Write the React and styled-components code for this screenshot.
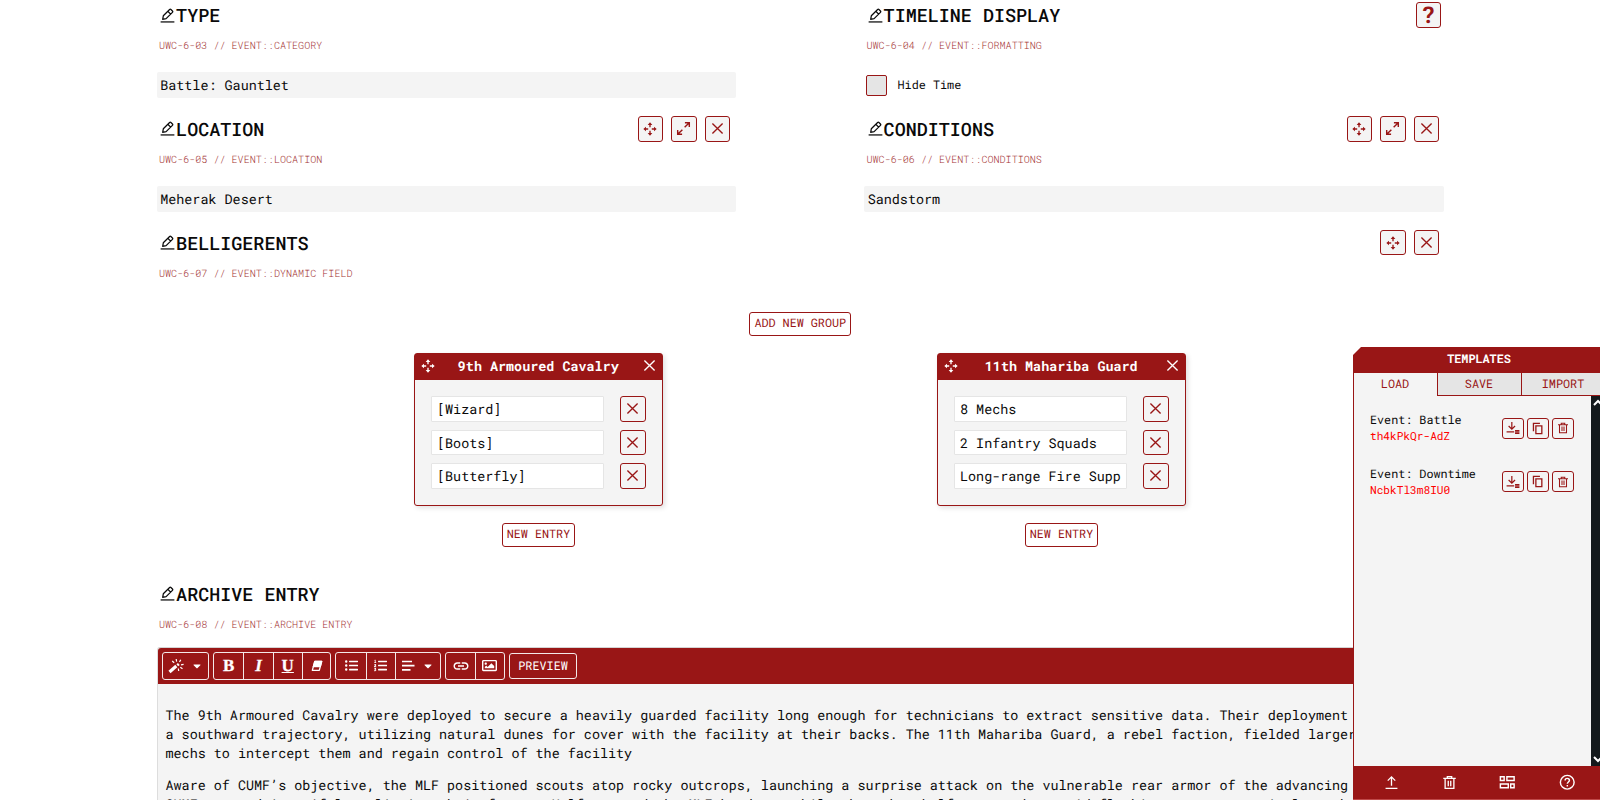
import React from 'react';
import styled, { createGlobalStyle } from 'styled-components';
import { FaListUl, FaListOl, FaCaretDown, FaRegImage } from 'react-icons/fa';
import { MdLink } from 'react-icons/md';

const red = '#991616';

const Global = createGlobalStyle`
  * { box-sizing: border-box; }
  body { margin: 0; background: #fff; overflow: hidden; }
  #root {
    font-family: 'Roboto Mono', 'Liberation Mono', monospace;
    font-size: 13.42px;
    color: #0a0a0a;
    text-rendering: geometricPrecision;
  }
  svg { display: block; flex: none; }
  button { font-family: inherit; text-rendering: inherit; }
`;

const Page = styled.main`
  width: 1600px;
  height: 800px;
  overflow: hidden;
  padding: 0 156px 0 156.5px;
`;
const Columns = styled.div`
  display: grid;
  grid-template-columns: 579.5px 580px;
  justify-content: space-between;
`;
const Section = styled.section`
  height: 113.8px;
`;
const TitleRow = styled.div`
  display: flex;
  align-items: center;
  justify-content: space-between;
  height: 30px;
  padding-right: ${(p) => p.$end || 5.5}px;
`;
const Title = styled.h2`
  display: flex;
  align-items: center;
  gap: 1px;
  margin: 0;
  padding: 0.4px 0 0 3.6px;
  font-size: 18.4px;
  font-weight: 500;
  line-height: 28px;
`;
const Code = styled.p`
  margin: 5px 0 0 2.5px;
  height: 20px;
  font-size: 10.08px;
  font-weight: 300;
  line-height: 20px;
  color: ${red};
  opacity: 0.9;
`;
const Field = styled.div`
  height: 26px;
  margin-top: 17px;
  padding-left: 3.7px;
  line-height: 26.5px;
  background: #f4f4f4;
  border-radius: 2px;
`;
const CheckRow = styled.label`
  display: flex;
  align-items: center;
  gap: 10.5px;
  height: 26px;
  margin: 17.5px 0 0 2px;
  font-size: 11.8px;
`;
const CheckBox = styled.span`
  width: 21px;
  height: 21px;
  background: #e5e5e5;
  border: 1px solid ${red};
  border-radius: 2px;
`;
const Actions = styled.div`
  display: flex;
  gap: 8px;
`;
const IconButton = styled.button`
  display: grid;
  place-items: center;
  width: ${(p) => p.$size || 25.5}px;
  height: ${(p) => p.$size || 25.5}px;
  padding: 0;
  color: ${red};
  background: #f4f4f4;
  border: 1px solid ${red};
  border-radius: 3px;
`;
const HelpMark = styled.span`
  font-size: 23px;
  font-weight: 700;
  line-height: 22px;
`;
const TextButton = styled.button`
  height: 24px;
  padding: 0 4px;
  font-size: 11.75px;
  line-height: 22px;
  color: ${red};
  background: #fff;
  border: 1px solid ${red};
  border-radius: 3px;
`;
const Belligerents = styled.section`
  height: 351px;
`;
const Center = styled.div`
  display: flex;
  justify-content: center;
  margin-top: 29.5px;
`;
const Groups = styled.div`
  display: grid;
  grid-template-columns: 523px 523px;
  justify-content: center;
  margin-top: 16.5px;
`;
const Group = styled.div`
  display: flex;
  flex-direction: column;
  align-items: center;
  gap: 17px;
  padding-right: 0.5px;
`;
const Card = styled.div`
  width: 249px;
  height: 153px;
  background: #f4f4f4;
  border: 1px solid ${red};
  border-radius: 3px;
  box-shadow: 2px 2px 5px rgba(0, 0, 0, 0.12);
`;
const CardHead = styled.div`
  display: flex;
  align-items: center;
  justify-content: space-between;
  height: 26px;
  padding: 0 4px 1.5px 4.5px;
  color: #fff;
  background: ${red};
  font-weight: 700;
`;
const CardBody = styled.div`
  display: grid;
  gap: 8px;
  padding: 16.5px 16.5px 0 16px;
`;
const Entry = styled.div`
  display: flex;
  justify-content: space-between;
`;
const EntryInput = styled.div`
  width: 173px;
  height: 25.5px;
  padding: 0 5px;
  overflow: hidden;
  white-space: nowrap;
  line-height: 24.5px;
  background: #fff;
  border: 1px solid #e5e5e5;
  border-radius: 1px;
`;
const Editor = styled.div`
  height: 180px;
  margin-top: 13.3px;
  background: #f4f4f4;
  border: 1px solid #d4d4d4;
  border-left-color: #ddd;
  border-radius: 3px 3px 0 0;
`;
const Toolbar = styled.div`
  display: flex;
  align-items: center;
  gap: 4px;
  height: 36px;
  padding-left: 4px;
  background: ${red};
  border-radius: 3px 3px 0 0;
`;
const ToolGroup = styled.div`
  display: flex;
  height: 27.5px;
  border: 1px solid #f4e8e8;
  border-radius: 3px;
`;
const Tool = styled.div`
  display: flex;
  align-items: center;
  justify-content: center;
  gap: 7px;
  width: ${(p) => p.$w || 29.3}px;
  color: #fff;
  & + & { border-left: 1px solid #f4e8e8; }
`;
const Glyph = styled.span`
  font-family: 'Liberation Serif', serif;
  font-size: 17px;
  font-weight: 700;
  line-height: 24px;
  font-style: ${(p) => (p.$italic ? 'italic' : 'normal')};
  text-decoration: ${(p) => (p.$underline ? 'underline' : 'none')};
  text-underline-offset: 1px;
  -webkit-text-stroke: 0.3px #fff;
`;
const Preview = styled.div`
  height: 26px;
  padding: 1px 8.3px 0;
  font-size: 11.8px;
  line-height: 24px;
  color: #fff;
  border: 1px solid #f4e8e8;
  border-radius: 3px;
`;
const Copy = styled.div`
  padding: 22.6px 0 0 8px;
  line-height: 18.75px;
  white-space: pre;
`;
const Paragraph = styled.p`
  margin: 0 0 13.2px;
`;

const Drawer = styled.aside`
  position: fixed;
  top: 347px;
  right: -5px;
  display: flex;
  flex-direction: column;
  width: 252px;
  height: 453px;
  background: ${red};
  clip-path: polygon(8px 0, 100% 0, 100% 100%, 0 100%, 0 8px);
  border-bottom: 1px solid #c04a4a;
`;
const DrawerTitle = styled.div`
  height: 26px;
  padding-top: 1px;
  color: #fff;
  font-size: 11.8px;
  font-weight: 700;
  line-height: 24.5px;
  text-align: center;
`;
const Tabs = styled.div`
  display: grid;
  grid-template-columns: repeat(3, 84px);
  height: 23px;
`;
const Tab = styled.div`
  padding-right: 1px;
  font-size: 11.8px;
  line-height: 23px;
  text-align: center;
  color: ${red};
  background: ${(p) => (p.$active ? '#f4f4f4' : '#e5e5e5')};
  box-shadow: ${(p) => (p.$active ? 'none' : `inset 0 -1px ${red}`)};
  border-left: 1px solid ${red};
`;
const DrawerBody = styled.div`
  display: flex;
  flex: 1;
  margin-left: 1px;
  background: #f4f4f4;
`;
const Templates = styled.div`
  flex: 1;
  padding: 15.4px 16.5px 0 16px;
`;
const Template = styled.div`
  display: flex;
  justify-content: space-between;
  align-items: center;
  height: 34px;
  margin-bottom: 19.2px;
`;
const TemplateName = styled.div`
  padding-top: 1px;
  font-size: 11.75px;
  line-height: 17px;
  white-space: nowrap;
`;
const TemplateId = styled.div`
  font-size: 11.15px;
  line-height: 16px;
  color: #f00;
`;
const TemplateActions = styled.div`
  display: flex;
  gap: 3.5px;
`;
const Scrollbar = styled.div`
  display: flex;
  flex-direction: column;
  justify-content: space-between;
  width: 14.5px;
  padding: 3px 0 3px 2px;
  color: #fff;
  background: #13191c;
`;
const DrawerFoot = styled.div`
  display: flex;
  justify-content: space-around;
  align-items: center;
  height: 33px;
  padding: 0 8.5px 0 9.5px;
  color: #fff;
`;

const Line = ({ size, w = 2, children }) => (
  <svg width={size} height={size} viewBox="0 0 24 24" fill="none" stroke="currentColor" strokeWidth={w}>{children}</svg>
);
const Pencil = () => (
  <Line size={15} w={2}>
    <path d="M1 22.300h22" />
    <path d="M4.300 18.300l1-5.800L15.400 2.400a1.500 1.500 0 0 1 2.100 0l2.400 2.400a1.500 1.500 0 0 1 0 2.100L9.800 17z M12.500 5.300l4.500 4.500" strokeLinejoin="round" />
  </Line>
);
const Move = ({ size = 16 }) => (
  <svg width={size} height={size} viewBox="0 0 24 24" fill="currentColor">
    {[0, 90, 180, 270].map((a) => (
      <path key={a} transform={`rotate(${a} 12 12)`} d="M12 2L15.500 6H13V9.300H11V6H8.500z" />
    ))}
  </svg>
);
const Expand = () => (
  <Line size={17} w={2}>
    <path d="M14 3.800h6.200V10M20.200 3.800L13.600 10.400M10 20.200H3.800V14M3.800 20.200l6.600-6.600" />
  </Line>
);
const Close = ({ size = 17 }) => (
  <Line size={size} w={1.9}><path d="M4.800 4.800l14.400 14.400M19.200 4.800l-14.400 14.400" /></Line>
);
const Trash = ({ size }) => (
  <Line size={size} w={2.1}>
    <path d="M2 5.500h20M8.500 5.500V2.500h7v3M5 5.500V21.500h14V5.500M10 9v9M14 9v9" />
  </Line>
);
const CopyIcon = () => (
  <Line size={13} w={2.4}><path d="M9 7h11v14.500H9zM4.500 17V2.500h12" /></Line>
);
const LoadIcon = () => (
  <Line size={14} w={2.1}>
    <path d="M10 1.500v12M4.500 8.500L10 14l5.500-5.500M1 18.800h13" />
    <path d="M15.500 16.500h7.500M15.500 19h7.500M15.500 21.500h7.500" strokeWidth="1.9" />
  </Line>
);
const Upload = () => (
  <Line size={15} w={2.1}><path d="M12 17V3M6 9l6-6 6 6M2.500 21.500h19" /></Line>
);
const Dashboard = () => (
  <Line size={16.500} w={2.1}><path d="M2 4h5.500v5.500H2zM11.500 4h10.500v5.500H11.500zM2 14.500h11.500v5.500H2zM17 14.500h5v5.500h-5z" /></Line>
);
const Help = () => (
  <Line size={16.500} w={2.100}>
    <circle cx="12" cy="12" r="10" />
    <path d="M8.900 9.300c0-4 6.300-3.900 6.300-.1 0 2.400-3.100 2.500-3.100 5M12.100 16v2.200" />
  </Line>
);
const Wand = () => (
  <svg width="16" height="16" viewBox="0 0 16 16" fill="none" stroke="currentColor">
    <path d="M1.500 14L8.300 8" strokeWidth="3.100" />
    <path d="M9.300 7.200l1.500-1.300" strokeWidth="2.700" />
    <path d="M8.200 1l.4 2.600M4.200 3l2 1.800M12.800 1.800l-1.300 2.100M13 6.800l2.600-.5M12.300 9.300l2.200 1.500M10.300 10.500l.4 2.500" strokeWidth="1.200" />
  </svg>
);
const Eraser = () => (
  <svg width="12" height="12" viewBox="0 0 12 12" fill="none" stroke="currentColor" strokeWidth="1.300" strokeLinejoin="round">
    <path d="M3.800 1.300h6.900L8.300 10.300H1.300z" />
    <path d="M3.800 1.300h6.900L9.300 6.700H2.300z" fill="currentColor" />
  </svg>
);
const AlignLeft = () => (
  <svg width="13" height="12" viewBox="0 0 13 12" fill="none" stroke="currentColor" strokeWidth="1.700">
    <path d="M0 1.500h10M0 5.700h12.500M0 9.900h8.500" />
  </svg>
);
const Chevron = ({ down }) => (
  <svg width="10" height="8" viewBox="0 0 10 8" fill="none" stroke="currentColor" strokeWidth="2">
    <path d={down ? 'M1 2l4 4 4-4' : 'M1 6l4-4 4 4'} />
  </svg>
);

const Heading = ({ title, code, end, children }) => (
  <>
    <TitleRow $end={end}>
      <Title><Pencil />{title}</Title>
      <Actions>{children}</Actions>
    </TitleRow>
    <Code>{code}</Code>
  </>
);
const MoveButton = () => <IconButton><Move /></IconButton>;
const ExpandButton = () => <IconButton><Expand /></IconButton>;
const CloseButton = () => <IconButton><Close /></IconButton>;

const groups = [
  { name: '9th Armoured Cavalry', entries: ['[Wizard]', '[Boots]', '[Butterfly]'] },
  { name: '11th Mahariba Guard', entries: ['8 Mechs', '2 Infantry Squads', 'Long-range Fire Supp'] },
];
const templates = [
  { name: 'Event: Battle', id: 'th4kPkQr-AdZ' },
  { name: 'Event: Downtime', id: 'NcbkTl3m8IU0' },
];

export default function App() {
  return (
    <>
      <Global />
      <Page>
        <Columns>
          <Section>
            <Heading title="TYPE" code="UWC-6-03 // EVENT::CATEGORY" />
            <Field>Battle: Gauntlet</Field>
          </Section>
          <Section>
            <Heading title="TIMELINE DISPLAY" code="UWC-6-04 // EVENT::FORMATTING" end={3}>
              <IconButton><HelpMark>?</HelpMark></IconButton>
            </Heading>
            <CheckRow><CheckBox />Hide Time</CheckRow>
          </Section>
          <Section>
            <Heading title="LOCATION" code="UWC-6-05 // EVENT::LOCATION" end={6}><MoveButton /><ExpandButton /><CloseButton /></Heading>
            <Field>Meherak Desert</Field>
          </Section>
          <Section>
            <Heading title="CONDITIONS" code="UWC-6-06 // EVENT::CONDITIONS" end={5}><MoveButton /><ExpandButton /><CloseButton /></Heading>
            <Field>Sandstorm</Field>
          </Section>
        </Columns>
        <Belligerents>
          <Heading title="BELLIGERENTS" code="UWC-6-07 // EVENT::DYNAMIC FIELD" end={5}><MoveButton /><CloseButton /></Heading>
          <Center><TextButton>ADD NEW GROUP</TextButton></Center>
          <Groups>
            {groups.map((g) => (
              <Group key={g.name}>
                <Card>
                  <CardHead><Move />{g.name}<Close size={17} /></CardHead>
                  <CardBody>
                    {g.entries.map((e) => (
                      <Entry key={e}><EntryInput>{e}</EntryInput><CloseButton /></Entry>
                    ))}
                  </CardBody>
                </Card>
                <TextButton>NEW ENTRY</TextButton>
              </Group>
            ))}
          </Groups>
        </Belligerents>
        <Heading title="ARCHIVE ENTRY" code="UWC-6-08 // EVENT::ARCHIVE ENTRY" />
        <Editor>
          <Toolbar>
            <ToolGroup><Tool $w={45.5}><Wand /><FaCaretDown size={12} /></Tool></ToolGroup>
            <ToolGroup>
              <Tool><Glyph>B</Glyph></Tool>
              <Tool><Glyph $italic>I</Glyph></Tool>
              <Tool><Glyph $underline>U</Glyph></Tool>
              <Tool $w={28.5}><Eraser /></Tool>
            </ToolGroup>
            <ToolGroup>
              <Tool><FaListUl size={13} /></Tool>
              <Tool><FaListOl size={13} /></Tool>
              <Tool $w={45.5}><AlignLeft /><FaCaretDown size={12} /></Tool>
            </ToolGroup>
            <ToolGroup>
              <Tool $w={28.5}><MdLink size={18} /></Tool>
              <Tool $w={29}><FaRegImage size={15} /></Tool>
            </ToolGroup>
            <Preview>PREVIEW</Preview>
          </Toolbar>
          <Copy>
            <Paragraph>
              {'The 9th Armoured Cavalry were deployed to secure a heavily guarded facility long enough for technicians to extract sensitive data. Their deployment\n'}
              {'a southward trajectory, utilizing natural dunes for cover with the facility at their backs. The 11th Mahariba Guard, a rebel faction, fielded larger\n'}
              {'mechs to intercept them and regain control of the facility'}
            </Paragraph>
            <Paragraph>
              {'Aware of CUMF’s objective, the MLF positioned scouts atop rocky outcrops, launching a surprise attack on the vulnerable rear armor of the advancing\n'}
              {'CUMF command in swiftly splitting their forces. Half engaged the MLF head-on, while the other half executed a rapid flanking movement to isolate the'}
            </Paragraph>
          </Copy>
        </Editor>
      </Page>
      <Drawer>
        <DrawerTitle>TEMPLATES</DrawerTitle>
        <Tabs><Tab $active>LOAD</Tab><Tab>SAVE</Tab><Tab>IMPORT</Tab></Tabs>
        <DrawerBody>
          <Templates>
            {templates.map((t) => (
              <Template key={t.id}>
                <div><TemplateName>{t.name}</TemplateName><TemplateId>{t.id}</TemplateId></div>
                <TemplateActions>
                  <IconButton $size={21.7}><LoadIcon /></IconButton>
                  <IconButton $size={21.7}><CopyIcon /></IconButton>
                  <IconButton $size={21.7}><Trash size={12} /></IconButton>
                </TemplateActions>
              </Template>
            ))}
          </Templates>
          <Scrollbar><Chevron /><Chevron down /></Scrollbar>
        </DrawerBody>
        <DrawerFoot><Upload /><Trash size={15} /><Dashboard /><Help /></DrawerFoot>
      </Drawer>
    </>
  );
}
